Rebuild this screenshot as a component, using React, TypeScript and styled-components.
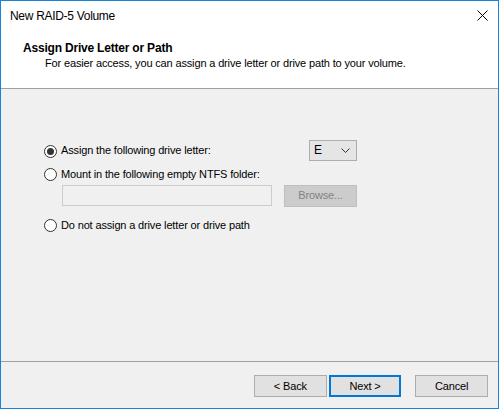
import styled, { createGlobalStyle } from "styled-components";

const GlobalStyle = createGlobalStyle`
  html, body {
    margin: 0;
    padding: 0;
    background: #ffffff;
  }
  body {
    font-family: "Liberation Sans", Arial, sans-serif;
    font-size: 11px;
    letter-spacing: -0.15px;
    line-height: 15px;
    color: #000;
  }
`;

const Window = styled.div`
  box-sizing: border-box;
  width: 499px;
  height: 409px;
  border: 1px solid #1883d7;
  display: flex;
  flex-direction: column;
  background: #f0f0f0;
`;

const TitleBar = styled.div`
  height: 29px;
  background: #fff;
  display: flex;
  align-items: center;
  justify-content: space-between;
  padding: 0 10px 0 9px;
`;

const Title = styled.span`
  font-size: 12px;
  letter-spacing: -0.3px;
  padding-top: 1px;
`;

const CloseIcon = styled.svg`
  width: 11px;
  height: 11px;
`;

const Header = styled.div`
  height: 59px;
  background: #fff;
  border-bottom: 1px solid #a0a0a0;
  box-sizing: border-box;
  padding: 11px 0 0 22px;
`;

const HeaderTitle = styled.div`
  font-weight: bold;
  font-size: 12px;
  letter-spacing: -0.2px;
  line-height: 15px;
`;

const HeaderText = styled.div`
  padding-left: 22px;
  line-height: 15px;
`;

const Body = styled.div`
  flex: 1;
  padding: 51px 0 0 43px;
  display: flex;
  flex-direction: column;
`;

const Row = styled.div<{ $top?: number; $height?: number }>`
  display: flex;
  align-items: center;
  width: 313px;
  height: ${(p) => p.$height ?? 16}px;
  margin-top: ${(p) => p.$top ?? 0}px;
`;

const Radio = styled.label`
  display: flex;
  align-items: center;
  gap: 4px;
  flex: 1;
  white-space: nowrap;
`;

const RadioDot = styled.span<{ $checked?: boolean }>`
  box-sizing: border-box;
  width: 13px;
  height: 13px;
  margin-top: 1px;
  border-radius: 50%;
  border: 1px solid #333;
  background: #fff;
  display: flex;
  align-items: center;
  justify-content: center;
  &::after {
    content: "";
    display: ${(p) => (p.$checked ? "block" : "none")};
    width: 7px;
    height: 7px;
    border-radius: 50%;
    background: #333;
  }
`;

const Select = styled.div`
  box-sizing: border-box;
  width: 48px;
  height: 21px;
  border: 1px solid #adadad;
  background: #e5e5e5;
  display: flex;
  align-items: center;
  justify-content: space-between;
  padding: 0 6px 0 4px;
  font-size: 12px;
`;

const PathInput = styled.div`
  box-sizing: border-box;
  width: 210px;
  height: 21px;
  margin-left: 18px;
  border: 1px solid #cccccc;
  background: #f0f0f0;
`;

const Button = styled.div<{ $disabled?: boolean; $default?: boolean }>`
  box-sizing: border-box;
  width: 73px;
  height: 22px;
  display: flex;
  align-items: center;
  justify-content: center;
  border: ${(p) => (p.$default ? "2px solid #0078d7" : "1px solid #adadad")};
  background: ${(p) => (p.$disabled ? "#cccccc" : "#e1e1e1")};
  border-color: ${(p) => (p.$disabled ? "#bfbfbf" : undefined)};
  color: ${(p) => (p.$disabled ? "#838383" : "#000")};
`;

const Footer = styled.div`
  height: 47px;
  box-sizing: border-box;
  border-top: 1px solid #a0a0a0;
  display: flex;
  align-items: flex-start;
  padding: 13px 10px 0 253px;
  gap: 2px;
`;

const Spacer = styled.div`
  width: 10px;
`;

const BrowseButton = styled(Button)`
  margin-left: auto;
`;

export default function App() {
  return (
    <>
      <GlobalStyle />
      <Window>
        <TitleBar>
          <Title>New RAID-5 Volume</Title>
          <CloseIcon viewBox="0 0 11 11">
            <path d="M0.5 0.5 L10.5 10.5 M10.5 0.5 L0.5 10.5" stroke="#000" strokeWidth="1" />
          </CloseIcon>
        </TitleBar>
        <Header>
          <HeaderTitle>Assign Drive Letter or Path</HeaderTitle>
          <HeaderText>
            For easier access, you can assign a drive letter or drive path to your volume.
          </HeaderText>
        </Header>
        <Body>
          <Row $height={21}>
            <Radio>
              <RadioDot $checked />
              Assign the following drive letter:
            </Radio>
            <Select>
              <span>E</span>
              <svg width="9" height="5" viewBox="0 0 9 5">
                <path d="M0.5 0.5 L4.5 4.5 L8.5 0.5" stroke="#333" fill="none" />
              </svg>
            </Select>
          </Row>
          <Row $top={5}>
            <Radio>
              <RadioDot />
              Mount in the following empty NTFS folder:
            </Radio>
          </Row>
          <Row $top={3} $height={21}>
            <PathInput />
            <BrowseButton $disabled>Browse...</BrowseButton>
          </Row>
          <Row $top={11}>
            <Radio>
              <RadioDot />
              Do not assign a drive letter or drive path
            </Radio>
          </Row>
        </Body>
        <Footer>
          <Button>&lt; Back</Button>
          <Button $default>Next &gt;</Button>
          <Spacer />
          <Button>Cancel</Button>
        </Footer>
      </Window>
    </>
  );
}
